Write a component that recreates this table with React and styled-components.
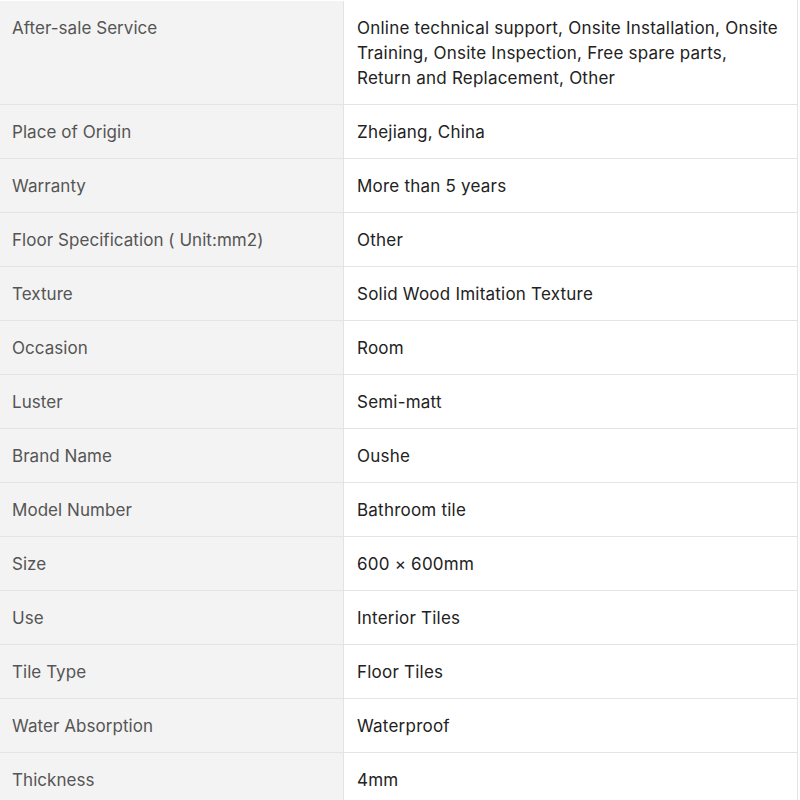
import React from "react";
import styled, { createGlobalStyle } from "styled-components";

const GlobalStyle = createGlobalStyle`
  body {
    margin: 0;
    background: #fff;
    font-family: Inter, "Noto Sans", sans-serif;
  }
`;

const SPECS = [
  ["After-sale Service", "Online technical support, Onsite Installation, Onsite Training, Onsite Inspection, Free spare parts, Return and Replacement, Other"],
  ["Place of Origin", "Zhejiang, China"],
  ["Warranty", "More than 5 years"],
  ["Floor Specification ( Unit:mm2)", "Other"],
  ["Texture", "Solid Wood Imitation Texture"],
  ["Occasion", "Room"],
  ["Luster", "Semi-matt"],
  ["Brand Name", "Oushe"],
  ["Model Number", "Bathroom tile"],
  ["Size", "600 × 600mm"],
  ["Use", "Interior Tiles"],
  ["Tile Type", "Floor Tiles"],
  ["Water Absorption", "Waterproof"],
  ["Thickness", "4mm"],
];

const Table = styled.div`
  width: 797px;
  padding-top: 1px;
  border-right: 1px solid #e4e4e4;
`;

const Row = styled.div`
  display: grid;
  grid-template-columns: 344px 1fr;
  border-bottom: 1px solid #e4e4e4;
`;

const Label = styled.div`
  background: #f3f3f3;
  color: #555;
  font-size: 17px;
  line-height: 25px;
  letter-spacing: 0.05px;
  padding: 15px 12px 13px;
  border-right: 1px solid #e4e4e4;
`;

const Value = styled.div`
  color: #222;
  font-size: 17px;
  line-height: 25px;
  letter-spacing: 0.22px;
  padding: 15px 14px 13px 13px;
`;

export default function App() {
  return (
    <>
      <GlobalStyle />
      <Table>
        {SPECS.map(([k, v]) => (
          <Row key={k}>
            <Label>{k}</Label>
            <Value>{v}</Value>
          </Row>
        ))}
      </Table>
    </>
  );
}
